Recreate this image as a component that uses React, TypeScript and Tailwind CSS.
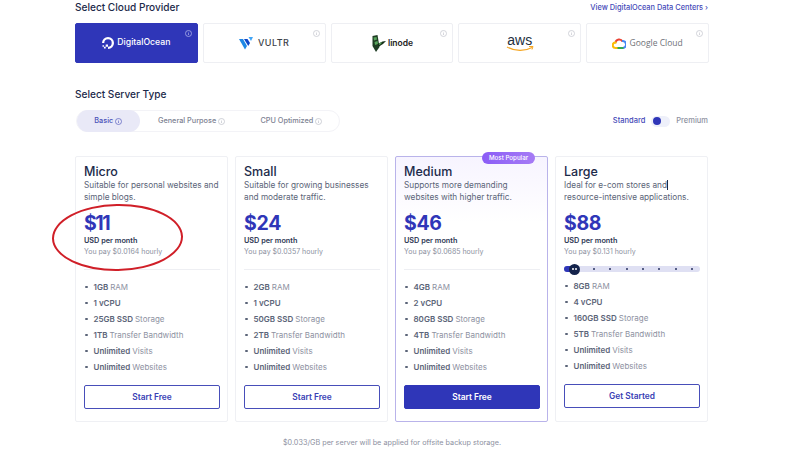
const Info = ({ c = "#b5b8c2" }: { c?: string }) => (
  <svg width="7" height="7" viewBox="0 0 12 12" fill="none" stroke={c} strokeWidth="1.1">
    <circle cx="6" cy="6" r="5.2" />
    <path d="M6 5.4v3.2M6 3.2v1" />
  </svg>
);

const DO = () => (
  <svg width="12" height="12" viewBox="0 0 24 24" fill="#fff">
    <path d="M12.040 24v-4.640a7.400 7.400 0 1 0-7.400-7.400H0A12 12 0 1 1 12.040 24Z" />
    <path d="M12 19.400H7.400v-4.600H12ZM7.400 22.900H3.900v-3.500h3.500ZM3.900 19.400H1v-2.900h2.900Z" />
  </svg>
);

const Vultr = () => (
  <svg width="14" height="13" viewBox="0 0 28 26">
    <path d="M0 4h8l8 14-4 7Z" fill="#1e88e5" />
    <path d="M10 4h7l5 8-3.500 6Z" fill="#0d47c9" />
    <path d="M19 0h9l-4 8Z" fill="#42a5f5" />
  </svg>
);

const Linode = () => (
  <svg width="15" height="17" viewBox="0 0 30 34">
    <path d="M3 2 13 0l4 24-7 10L3 22Z" fill="#1f3d24" />
    <path d="M5 5l6-1 1 5-6 2ZM7 14l6-2 1 6-6 2Z" fill="#58a55c" />
    <path d="M13 18l10-5 7-1-6 6-8 5Z" fill="#173019" />
    <path d="M16 17l6-3-2 4-4 2Z" fill="#58a55c" />
  </svg>
);

const Google = () => (
  <svg width="14" height="11" viewBox="0 0 28 22" fill="none" strokeWidth="4">
    <path d="M7 9a7.500 7.500 0 0 1 14-2" stroke="#ea4335" />
    <path d="M20 6a6 6 0 0 1 2 14" stroke="#4285f4" />
    <path d="M23 20H10" stroke="#34a853" />
    <path d="M11 20H7A5.500 5.500 0 0 1 7 9l2 .4" stroke="#fbbc05" />
  </svg>
);

const Provider = ({ active, children }: { active?: boolean; children: React.ReactNode }) => (
  <div
    className={`relative flex flex-1 h-[40px] items-center justify-center rounded-[2px] border ${
      active ? "bg-[#2f36b8] border-[#2f36b8]" : "bg-white border-[#eeeff3]"
    }`}
  >
    <span className="absolute right-[5px] top-[6px] flex">
      <Info c={active ? "#c5c9f2" : "#bcbec6"} />
    </span>
    {children}
  </div>
);

type Plan = {
  name: string;
  desc: string[];
  price: string;
  hourly: string;
  specs: [string, string][];
  cta: string;
  popular?: boolean;
  slider?: boolean;
};

const plans: Plan[] = [
  {
    name: "Micro",
    desc: ["Suitable for personal websites and", "simple blogs."],
    price: "$11",
    hourly: "You pay $0.0164 hourly",
    specs: [["1GB", "RAM"], ["1 vCPU", ""], ["25GB SSD", "Storage"], ["1TB", "Transfer Bandwidth"], ["Unlimited", "Visits"], ["Unlimited", "Websites"]],
    cta: "Start Free",
  },
  {
    name: "Small",
    desc: ["Suitable for growing businesses", "and moderate traffic."],
    price: "$24",
    hourly: "You pay $0.0357 hourly",
    specs: [["2GB", "RAM"], ["1 vCPU", ""], ["50GB SSD", "Storage"], ["2TB", "Transfer Bandwidth"], ["Unlimited", "Visits"], ["Unlimited", "Websites"]],
    cta: "Start Free",
  },
  {
    name: "Medium",
    desc: ["Supports more demanding", "websites with higher traffic."],
    price: "$46",
    hourly: "You pay $0.0685 hourly",
    specs: [["4GB", "RAM"], ["2 vCPU", ""], ["80GB SSD", "Storage"], ["4TB", "Transfer Bandwidth"], ["Unlimited", "Visits"], ["Unlimited", "Websites"]],
    cta: "Start Free",
    popular: true,
  },
  {
    name: "Large",
    desc: ["Ideal for e-com stores and", "resource-intensive applications."],
    price: "$88",
    hourly: "You pay $0.131 hourly",
    specs: [["8GB", "RAM"], ["4 vCPU", ""], ["160GB SSD", "Storage"], ["5TB", "Transfer Bandwidth"], ["Unlimited", "Visits"], ["Unlimited", "Websites"]],
    cta: "Get Started",
    slider: true,
  },
];

const Slider = () => (
  <div className="relative mt-[10px] mb-[6px] flex h-[6px] items-center justify-between rounded-full bg-[#dfe0f3] pl-[29px] pr-[7px]">
    <span className="absolute left-0 top-0 h-[6px] w-[9px] rounded-l-full bg-[#2f36b8]" />
    <span className="absolute left-[5px] top-[-2.500px] flex h-[11px] w-[11px] items-center justify-center gap-[1px] rounded-full bg-[#14234b]">
      <span className="h-[2px] w-[2px] rounded-full bg-white" />
      <span className="h-[2px] w-[2px] rounded-full bg-white" />
    </span>
    {Array.from({ length: 7 }).map((_, i) => (
      <span key={i} className="h-[2px] w-[2px] rounded-full bg-[#2a3360]" />
    ))}
  </div>
);

const Card = ({ p }: { p: Plan }) => (
  <div
    className={`relative flex w-[153px] flex-col rounded-[2px] border pl-[8px] pr-[7px] pt-[8px] ${
      p.popular
        ? "border-[#b9b3ea] bg-gradient-to-b from-[#f7f4ff] to-white to-[25%]"
        : "border-[#eff0f4] bg-white"
    }`}
  >
    {p.popular && (
      <span className="absolute right-[12px] top-[-5px] flex h-[12px] w-[53px] items-center justify-center rounded-full bg-gradient-to-r from-[#8b5cf6] to-[#a67bf5] text-[6.200px] font-medium text-white">
        Most Popular
      </span>
    )}
    <div className="text-[12.500px] leading-[14px] font-medium text-[#1c2a4a]">{p.name}</div>
    <div className="text-[8.250px] leading-[12px] text-[#5b6478]">
      <div className="relative w-fit whitespace-nowrap">
        {p.desc[0]}
        {p.slider && <span className="absolute right-[-1px] top-[1px] h-[10px] w-px bg-[#1c2a4a]" />}
      </div>
      <div className="whitespace-nowrap">{p.desc[1]}</div>
    </div>
    <div className={`mt-[8px] text-[19.500px] leading-[24px] font-bold text-[#2f36b8] ${p.price === "$11" ? "tracking-[-1.500px]" : "tracking-[-0.300px]"}`}>
      {p.price}
    </div>
    <div className="mt-[1px] text-[7.300px] leading-[9px] font-semibold text-[#2b3652]">USD per month</div>
    <div className="mt-[2px] text-[7px] leading-[9px] text-[#8b90a0]">{p.hourly}</div>
    {p.slider ? <Slider /> : <div className="mt-[13px] mb-[9px] h-px bg-[#eeeff3]" />}
    <ul className="flex flex-col">
      {p.specs.map(([b, r], i) => (
        <li key={i} className="flex h-[16px] items-center text-[8px] text-[#8d91a1]">
          <span className="mr-[6px] ml-[1px] h-[2.500px] w-[2.500px] rounded-full bg-[#5b6478]" />
          <span className="font-semibold text-[#5b6478]">{b}</span>
          {r && <span className="ml-[2px]">{r}</span>}
        </li>
      ))}
    </ul>
    <button
      className={`mt-[10px] h-[24px] rounded-[2px] border text-[8.400px] font-semibold ${
        p.popular ? "border-[#2f36b8] bg-[#2f36b8] text-white" : "border-[#474eb9] bg-white text-[#3a41b5]"
      }`}
    >
      {p.cta}
    </button>
  </div>
);

export default function App() {
  return (
    <div className="relative h-[450px] w-[800px] overflow-hidden bg-white pl-[75px] pr-[91px] font-['Inter','Liberation_Sans',sans-serif]">
      <div className="flex h-[15px] items-center justify-between">
        <span className="text-[10.100px] font-medium text-[#1c2a4a]">Select Cloud Provider</span>
        <span className="pr-[1px] text-[7.400px] font-medium text-[#4449b8]">View DigitalOcean Data Centers ›</span>
      </div>
      <div className="mt-[8px] flex gap-[5px]">
        <Provider active>
          <span className="flex items-center gap-[3px] text-[8.700px] font-medium text-white">
            <DO />
            DigitalOcean
          </span>
        </Provider>
        <Provider>
          <span className="flex items-center gap-[5px] text-[9px] font-medium tracking-[0.5px] text-[#3b3f48]">
            <Vultr />
            VULTR
          </span>
        </Provider>
        <Provider>
          <span className="flex items-center gap-[2px] text-[8.500px] font-semibold text-[#222]">
            <Linode />
            linode
          </span>
        </Provider>
        <Provider>
          <span className="flex flex-col items-center text-[#232f3e]">
            <span className="font-['Liberation_Sans',sans-serif] text-[14px] leading-[12px]">aws</span>
            <svg width="28" height="6" viewBox="0 0 28 6" fill="none">
              <path d="M1 1c8 4.500 18 4.500 25 .5" stroke="#f5a623" strokeWidth="1.200" />
              <path d="M23 .5h4l-1 3" stroke="#f5a623" strokeWidth="1" />
            </svg>
          </span>
        </Provider>
        <Provider>
          <span className="flex items-center gap-[3px] font-['Open_Sans',sans-serif] text-[8.500px] text-[#6f7278]">
            <Google />
            Google Cloud
          </span>
        </Provider>
      </div>

      <div className="mt-[24px] text-[10.100px] leading-[14px] font-medium text-[#1c2a4a]">Select Server Type</div>

      <div className="mt-[9px] flex h-[22px] items-center justify-between">
        <div className="ml-[1px] flex h-[22px] w-[264px] items-center rounded-full border border-[#f3f3f7] text-[7.300px] font-medium text-[#7d8292]">
          <span className="flex h-[22px] w-[63px] items-center justify-center gap-[2px] rounded-full bg-[#e9e9f7] text-[#4a50b8]">
            Basic <Info c="#4a50b8" />
          </span>
          <span className="flex w-[105px] items-center justify-center gap-[2px]">
            General Purpose <Info />
          </span>
          <span className="flex w-[96px] items-center justify-center gap-[2px]">
            CPU Optimized <Info />
          </span>
        </div>
        <div className="flex items-center pr-[1px] text-[7.500px] font-medium">
          <span className="text-[#4449b8]">Standard</span>
          <span className="ml-[6px] mr-[6px] flex h-[11px] w-[19px] items-center rounded-full bg-[#eef0fa]">
            <span className="ml-[2px] h-[8px] w-[8px] rounded-full bg-[#2f36b8]" />
          </span>
          <span className="text-[#8d91a1]">Premium</span>
        </div>
      </div>

      <div className="mt-[24px] flex h-[266px] gap-[7px]">
        {plans.map((p) => (
          <Card key={p.name} p={p} />
        ))}
      </div>

      <div className="mt-[16px] text-center text-[7.250px] text-[#8d91a1]">
        $0.033/GB per server will be applied for offsite backup storage.
      </div>

      <span className="absolute left-[52px] top-[204px] h-[67px] w-[131px] -rotate-[1deg] rounded-[50%] border-2 border-[#d01f28]" />
    </div>
  );
}
